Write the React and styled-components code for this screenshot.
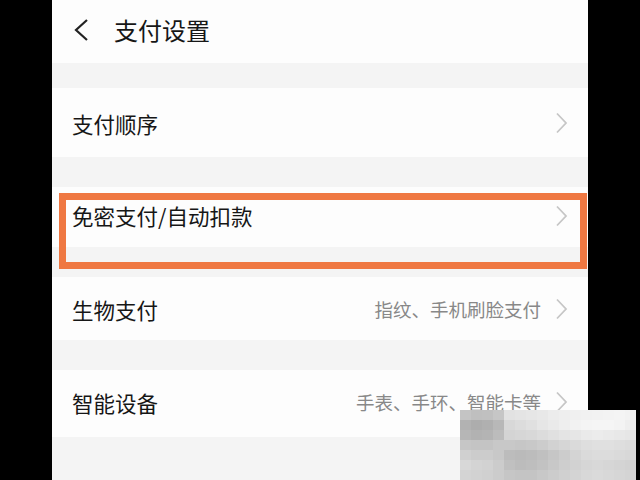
import styled, { createGlobalStyle } from "styled-components";

const Global = createGlobalStyle`
  html, body { margin: 0; padding: 0; background: #000; }
  * { box-sizing: border-box; }
`;

const Frame = styled.div`
  position: relative;
  width: 640px;
  height: 480px;
  background: #000;
  overflow: hidden;
  display: flex;
  font-family: "Noto Sans CJK SC", "Noto Sans", sans-serif;
`;

const Phone = styled.div`
  margin-left: 52px;
  width: 536px;
  height: 480px;
  background: #f4f4f4;
  display: flex;
  flex-direction: column;
`;

const Header = styled.div`
  height: 63px;
  background: #fdfdfd;
  display: flex;
  align-items: center;
  padding: 0 0 4px 21px;
  gap: 24px;
`;

const Title = styled.div`
  font-size: 24px;
  color: #161616;
  line-height: 1;
`;

const Gap = styled.div`
  height: ${(p) => p.$h}px;
  flex-shrink: 0;
`;

const Row = styled.div`
  position: relative;
  height: ${(p) => p.$h}px;
  padding: ${(p) => p.$pt || 0}px 20px ${(p) => p.$pb || 0}px 20px;
  background: #fdfdfd;
  display: flex;
  align-items: center;
  flex-shrink: 0;
`;

const Label = styled.div`
  font-size: 21.5px;
  color: #161616;
  flex: 1;
`;

const Value = styled.div`
  font-size: 18.5px;
  color: #888;
  margin-right: 14px;
`;

const Highlight = styled.div`
  position: absolute;
  top: 6px;
  left: 7px;
  width: 528px;
  height: 76px;
  border: 7px solid #ef7842;
  pointer-events: none;
`;

const Mosaic = styled.div`
  position: absolute;
  left: 460px;
  top: 410px;
  display: grid;
  grid-template-columns: repeat(16, 11px);
  grid-auto-rows: 10px;
`;

const Tile = styled.div`
  background: ${(p) => p.$c};
`;

const Chevron = () => (
  <svg width="13" height="22" viewBox="0 0 13 22">
    <polyline points="2,1.5 11,11 2,20.5" fill="none" stroke="#c6c6c6" strokeWidth="1.8" />
  </svg>
);

const Back = () => (
  <svg width="17" height="24" viewBox="0 0 17 24">
    <polyline points="14,2 3,12 14,22" fill="none" stroke="#222" strokeWidth="2.2" />
  </svg>
);

const shades = [
  ["c4", "bf", "c0", "c6", "e2", "e4", "e6", "e8", "ec", "ee", "f0", "f1", "f2", "f3", "f4", "f2"],
  ["b2", "ad", "b0", "b8", "d8", "dc", "e0", "e6", "ea", "ee", "f2", "f4", "f5", "f5", "f3", "ee"],
  ["b6", "b2", "b4", "bc", "d4", "d6", "d8", "dc", "e0", "e4", "e6", "ea", "ec", "ea", "e8", "e6"],
  ["c6", "c4", "c4", "c8", "c8", "c6", "c8", "cc", "d2", "d6", "da", "de", "e0", "e0", "de", "dc"],
  ["d0", "cc", "cc", "c8", "bc", "ba", "bc", "c0", "c6", "cc", "d4", "da", "dc", "dc", "da", "d8"],
  ["d8", "d4", "d2", "cc", "c0", "bc", "be", "c2", "c8", "ce", "d2", "d6", "d8", "d6", "d4", "d2"],
  ["d4", "d2", "d0", "cc", "c6", "c4", "c4", "c8", "cc", "d0", "d4", "d8", "da", "d8", "d6", "d4"],
];

export default function App() {
  return (
    <Frame>
      <Global />
      <Phone>
        <Header>
          <Back />
          <Title>支付设置</Title>
        </Header>
        <Gap $h={25} />
        <Row $h={69} $pt={1}>
          <Label>支付顺序</Label>
          <Chevron />
        </Row>
        <Gap $h={30} />
        <Row $h={60} $pb={3}>
          <Label>免密支付/自动扣款</Label>
          <Chevron />
          <Highlight />
        </Row>
        <Gap $h={30} />
        <Row $h={63} $pt={1}>
          <Label>生物支付</Label>
          <Value>指纹、手机刷脸支付</Value>
          <Chevron />
        </Row>
        <Gap $h={30} />
        <Row $h={67} $pb={3}>
          <Label>智能设备</Label>
          <Value>手表、手环、智能卡等</Value>
          <Chevron />
        </Row>
      </Phone>
      <Mosaic>
        {shades.flatMap((row, r) =>
          row.map((s, c) => <Tile key={`${r}-${c}`} $c={`#${s}${s}${s}`} />)
        )}
      </Mosaic>
    </Frame>
  );
}
